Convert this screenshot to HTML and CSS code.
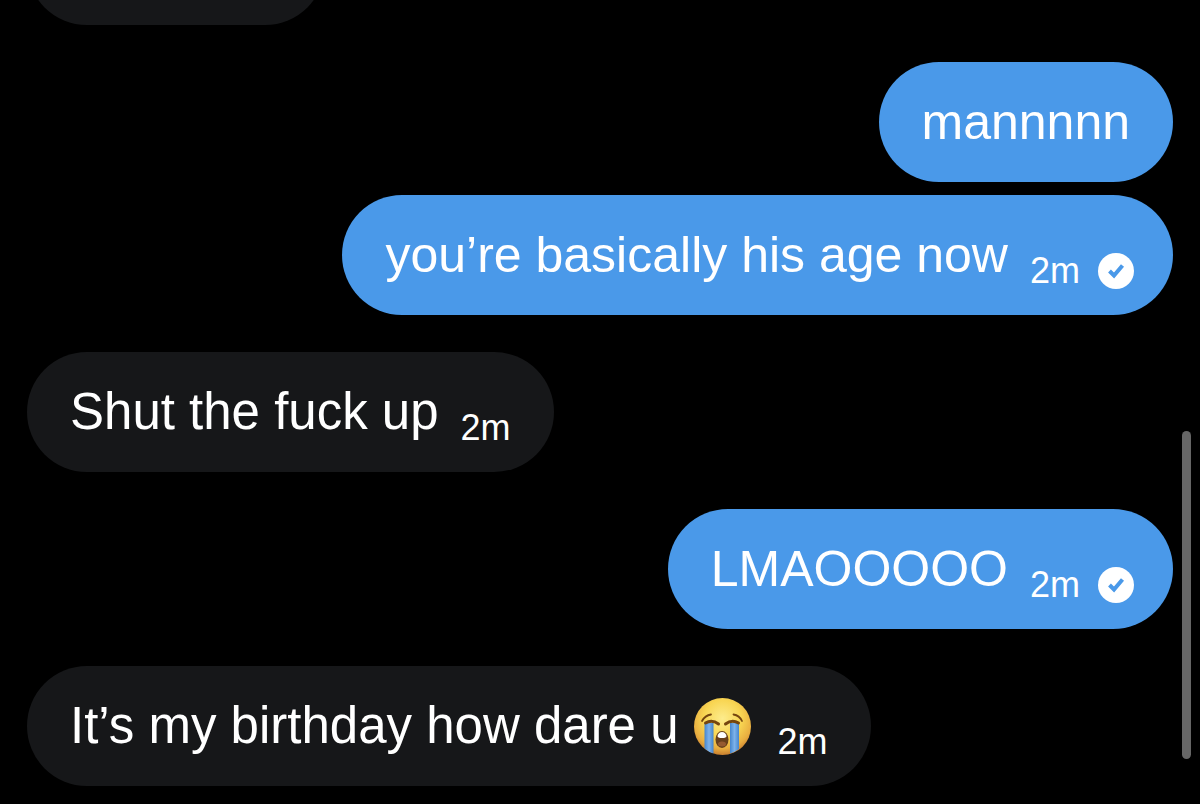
FILE: index.html
```html
<!DOCTYPE html>
<html lang="en">
<head>
    <meta charset="UTF-8">
    <meta name="viewport" content="width=device-width, initial-scale=1.0">
    <title>Messages</title>
    <link rel="stylesheet" href="styles.css">
</head>
<body>
    <main class="chat">
        <div class="group received">
            <div class="bubble clipped"></div>
        </div>

        <div class="group sent">
            <div class="bubble">
                <span class="text">mannnnn</span>
            </div>
            <div class="bubble">
                <span class="text">you’re basically his age now</span>
                <span class="meta">
                    <time>2m</time>
                    <svg class="check" viewBox="0 0 36 36" role="img" aria-label="Sent">
                        <circle cx="18" cy="18" r="18"/>
                        <path d="M11.500 18l4.500 4.500 8.500-10"/>
                    </svg>
                </span>
            </div>
        </div>

        <div class="group received">
            <div class="bubble">
                <span class="text">Shut the fuck up</span>
                <span class="meta"><time>2m</time></span>
            </div>
        </div>

        <div class="group sent">
            <div class="bubble">
                <span class="text">LMAOOOOO</span>
                <span class="meta">
                    <time>2m</time>
                    <svg class="check" viewBox="0 0 36 36" role="img" aria-label="Sent">
                        <circle cx="18" cy="18" r="18"/>
                        <path d="M11.500 18l4.500 4.500 8.500-10"/>
                    </svg>
                </span>
            </div>
        </div>

        <div class="group received">
            <div class="bubble">
                <span class="text">It’s my birthday how dare u</span>
                <svg class="emoji" viewBox="0 0 57 57" role="img" aria-label="Loudly crying face">
                    <defs>
                        <radialGradient id="face" cx="50%" cy="36%" r="66%">
                            <stop offset="0" stop-color="#fdec8c"/>
                            <stop offset="0.5" stop-color="#f8d552"/>
                            <stop offset="0.8" stop-color="#e9ae40"/>
                            <stop offset="1" stop-color="#c2762c"/>
                        </radialGradient>
                        <linearGradient id="tear" x1="0" x2="1" y1="0" y2="0">
                            <stop offset="0" stop-color="#4585cc"/>
                            <stop offset="0.5" stop-color="#7db2ea"/>
                            <stop offset="1" stop-color="#4585cc"/>
                        </linearGradient>
                    </defs>
                    <circle cx="28.5" cy="28.5" r="28.5" fill="url(#face)"/>
                    <path d="M10.500 25h9v30.500q-5-1.500-9-5z" fill="url(#tear)"/>
                    <path d="M36 25h9v26q-4 3-9 4.500z" fill="url(#tear)"/>
                    <g fill="none" stroke="#75460f" stroke-linecap="round">
                        <path d="M8 23q3-5.500 9-6.500M39.500 16.500q6 1 8.500 6.500" stroke-width="1.800"/>
                        <path d="M11.500 25q6.500-4 13 1M31.500 26q6.500-5 13-1" stroke-width="3"/>
                    </g>
                    <ellipse cx="28" cy="41.500" rx="6.500" ry="8.500" fill="#68401b"/>
                    <path d="M23.500 38q1-4 4.500-4t4.500 4q0 2-4.500 2t-4.500-2z" fill="#fff"/>
                    <ellipse cx="28" cy="46" rx="4" ry="2.500" fill="#965a30"/>
                </svg>
                <span class="meta"><time>2m</time></span>
            </div>
        </div>
    </main>
    <div class="scroll-thumb"></div>
</body>
</html>
```

FILE: styles.css
```css
* {
    box-sizing: border-box;
}

body {
    margin: 0;
    background: #000;
    color: #fff;
    font-family: "Liberation Sans", Arial, sans-serif;
}

/* newest message stays at the bottom, older ones run off the top */
.chat {
    display: flex;
    flex-direction: column;
    justify-content: flex-end;
    gap: 37px;
    height: 100vh;
    padding: 0 27px 18px;
    overflow: hidden;
}

.group {
    display: flex;
    flex-direction: column;
    flex-shrink: 0;
    gap: 13px;
}

.received {
    align-items: flex-start;
}

.sent {
    align-items: flex-end;
}

.bubble {
    display: flex;
    align-items: flex-end;
    min-height: 120px;
    padding: 30px 43px;
    border-radius: 60px;
}

.received .bubble {
    background: #161719;
}

.sent .bubble {
    background: #4a99e9;
}

.clipped {
    width: 298px;
}

.text {
    font-size: 50px;
    line-height: 60px;
}

.received .text {
    font-size: 51px;
}

.meta {
    display: flex;
    align-items: center;
    gap: 18px;
    margin-left: 22px;
    font-size: 36px;
    line-height: 28px;
}

.check {
    width: 36px;
    height: 36px;
    margin: -4px -4px -4px 0;
}

.check circle {
    fill: #fff;
}

.check path {
    fill: none;
    stroke: #4a99e9;
    stroke-width: 4;
}

.emoji {
    align-self: center;
    width: 57px;
    height: 57px;
    margin-left: 15px;
    margin-right: 5px;
}

.scroll-thumb {
    position: fixed;
    right: 9px;
    bottom: 45px;
    width: 9px;
    height: 328px;
    border-radius: 5px;
    background: #666;
}
```
